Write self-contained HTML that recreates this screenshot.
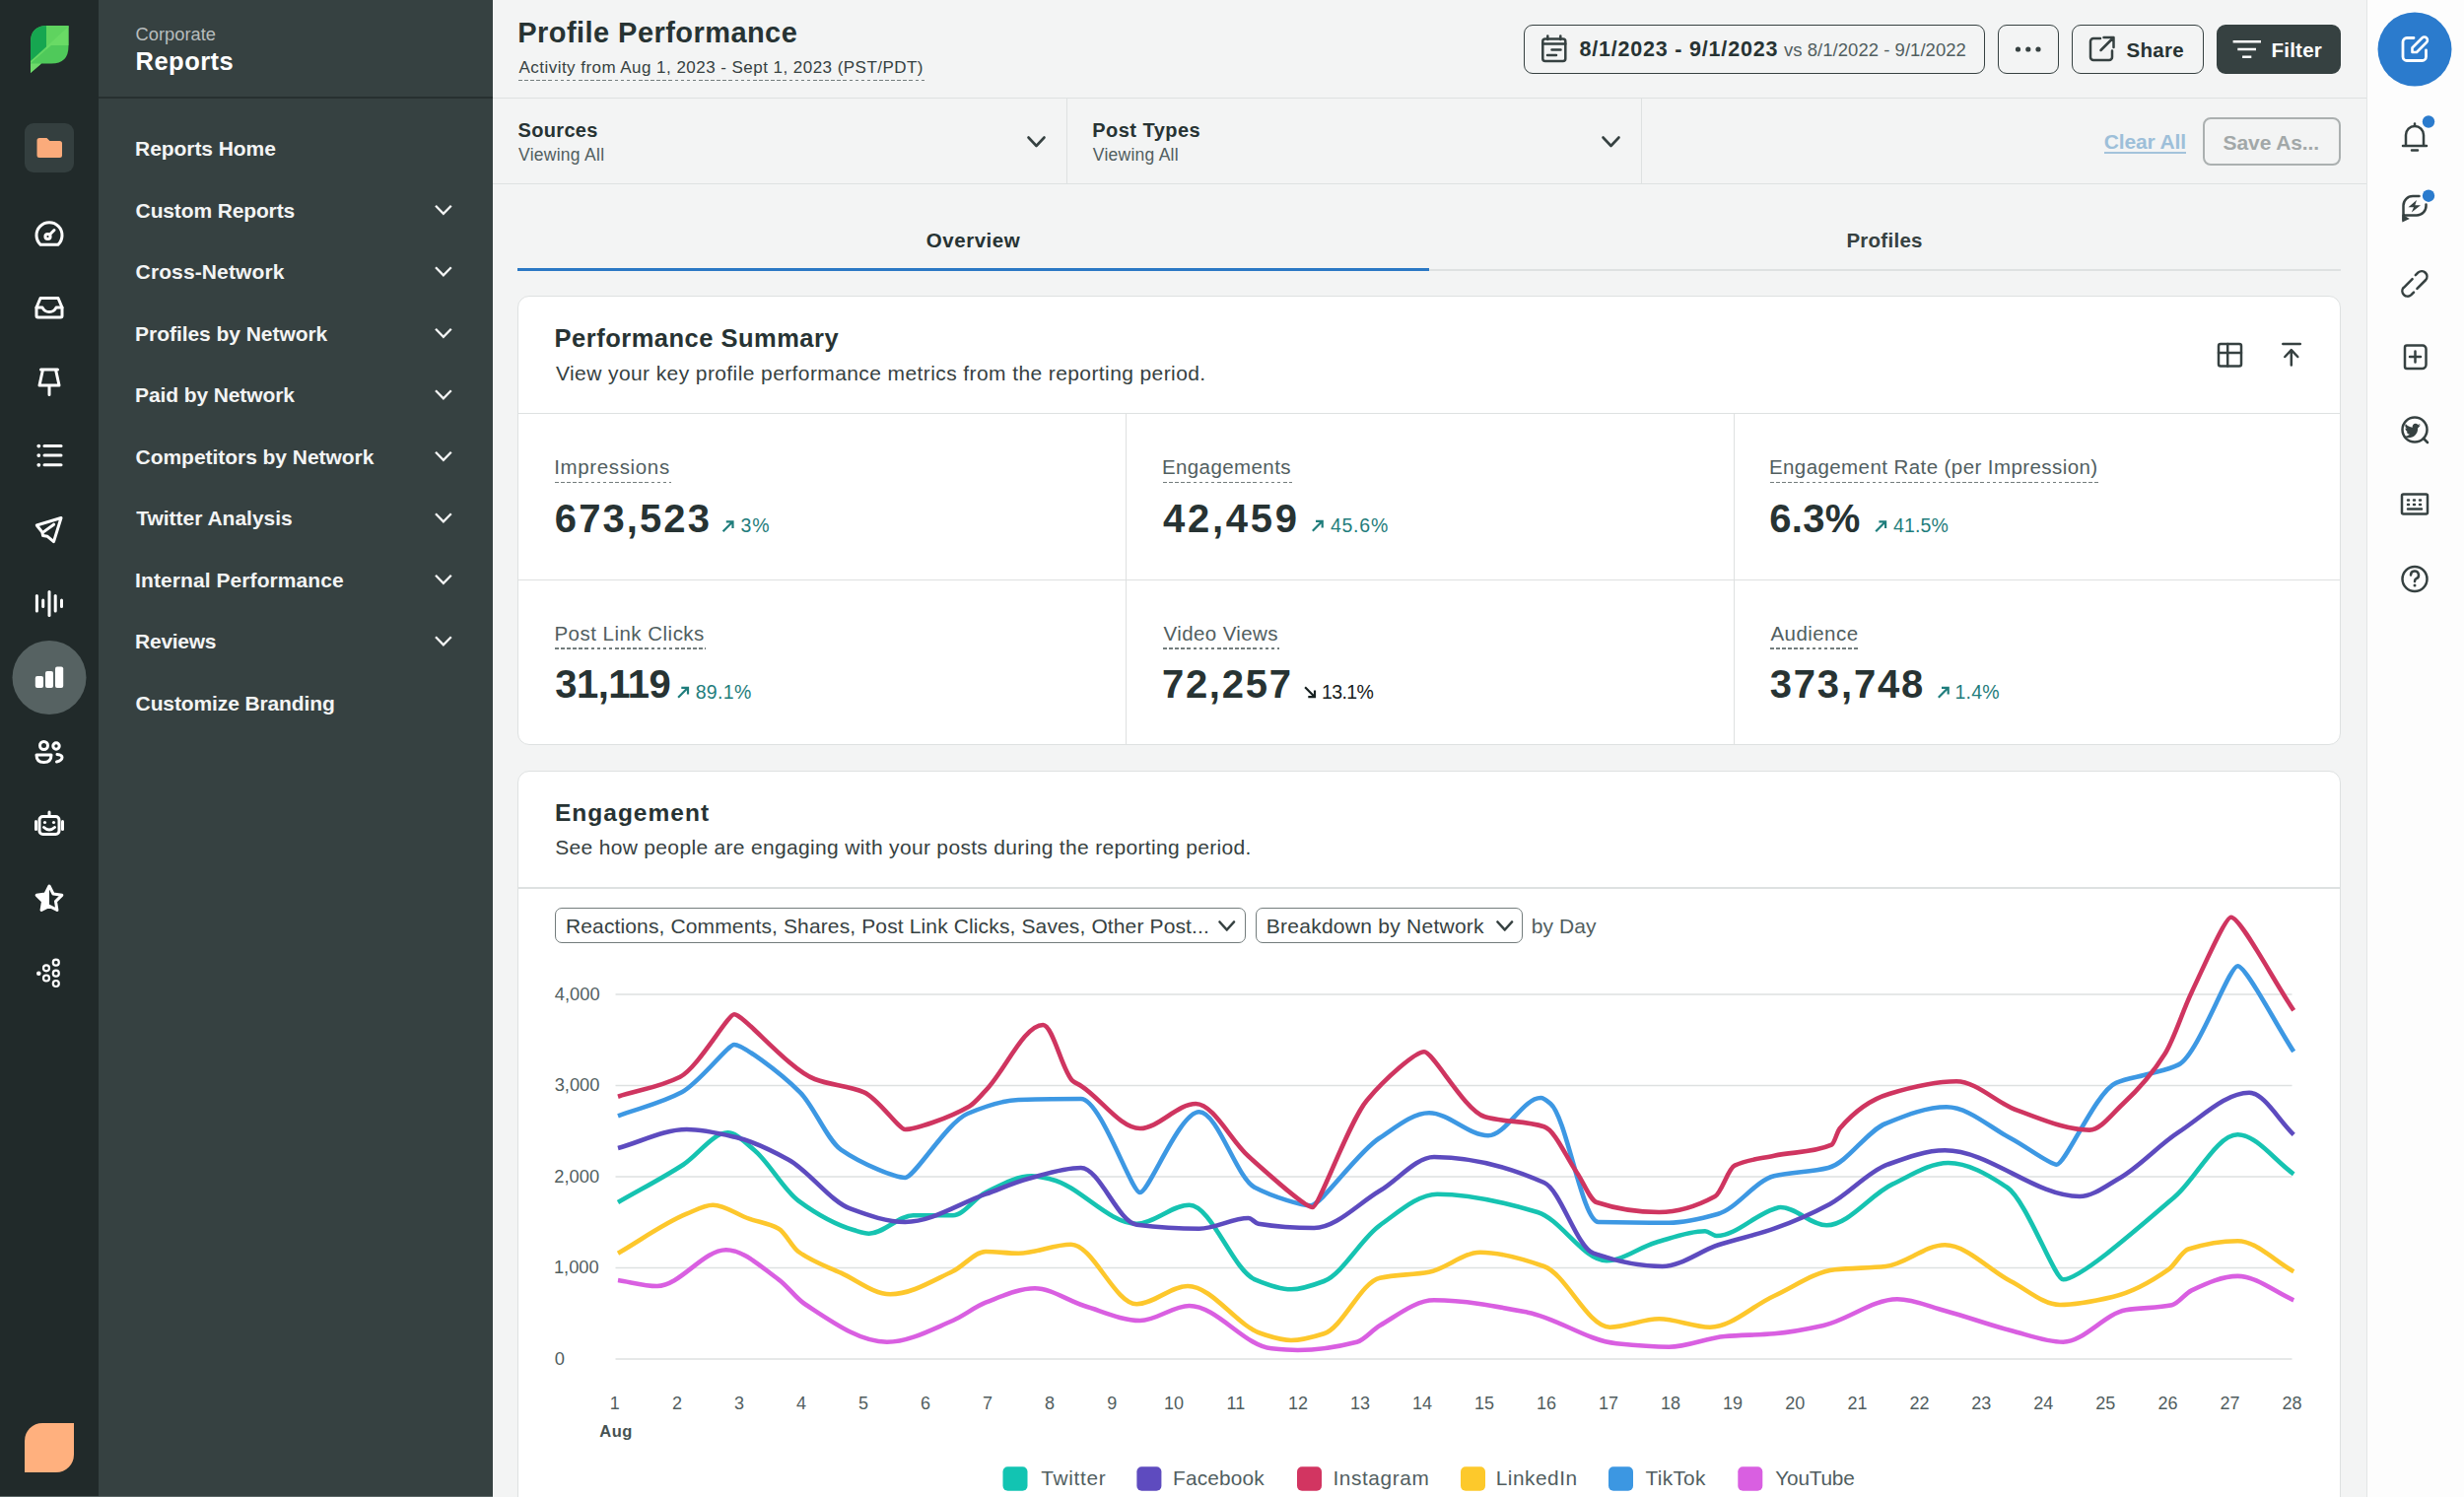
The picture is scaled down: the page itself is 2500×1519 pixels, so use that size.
<!DOCTYPE html>
<html><head><meta charset="utf-8"><title>Profile Performance</title>
<style>
html,body{margin:0;padding:0;}
body{width:2500px;height:1519px;position:relative;overflow:hidden;background:#f3f4f4;font-family:"Liberation Sans", sans-serif;}
.abs{position:absolute;}
.t{position:absolute;white-space:pre;line-height:1;}
</style></head><body>
<div class=abs style="left:0px;top:0px;width:100px;height:1519px;background:#212a2a;"></div>
<div class=abs style="left:100px;top:0px;width:400px;height:1519px;background:#364141;"></div>
<div class=abs style="left:100px;top:98px;width:400px;height:2px;background:#273030;"></div>
<div class=abs style="left:0px;top:1517.5px;width:500px;height:1.5px;background:#5b6666;"></div>
<div class=abs style="left:500px;top:98.5px;width:1901px;height:1.5px;background:#dee1e1;"></div>
<div class=abs style="left:500px;top:185.5px;width:1901px;height:1.5px;background:#dee1e1;"></div>
<div class=abs style="left:1081.5px;top:100px;width:1.5px;height:85.5px;background:#dee1e1;"></div>
<div class=abs style="left:1664.5px;top:100px;width:1.5px;height:85.5px;background:#dee1e1;"></div>
<div class=abs style="left:2401px;top:0px;width:99px;height:1519px;background:#fdfdfd;border-left:1.5px solid #e3e6e6;box-sizing:border-box"></div>
<div class=abs style="left:1545.5px;top:25px;width:468.0px;height:49.5px;background:transparent;border:1.8px solid #364141;border-radius:9px;box-sizing:border-box"></div>
<div class=abs style="left:2027px;top:25px;width:61.5px;height:49.5px;background:transparent;border:1.8px solid #364141;border-radius:9px;box-sizing:border-box"></div>
<div class=abs style="left:2102px;top:25px;width:133.5px;height:49.5px;background:transparent;border:1.8px solid #364141;border-radius:9px;box-sizing:border-box"></div>
<div class=abs style="left:2249px;top:25px;width:126px;height:49.5px;background:#364141;border:2px solid #364141;border-radius:9px;box-sizing:border-box"></div>
<div class=abs style="left:2234.5px;top:119px;width:140.5px;height:49px;background:transparent;border:2px solid #abb0b0;border-radius:8px;box-sizing:border-box"></div>
<div class=abs style="left:2135px;top:154.3px;width:82.5px;height:1.6999999999999886px;background:#a3c3db;"></div>
<div class=abs style="left:525px;top:273px;width:1850px;height:1.5px;background:#dee1e1;"></div>
<div class=abs style="left:525px;top:271.5px;width:925px;height:3.3000000000000114px;background:#2a78c4;"></div>
<div class=abs style="left:525px;top:300px;width:1850px;height:455.5px;background:#ffffff;border:1.5px solid #dee1e1;border-radius:12px;box-sizing:border-box"></div>
<div class=abs style="left:526px;top:418.5px;width:1848px;height:1.5px;background:#dee1e1;"></div>
<div class=abs style="left:526px;top:587.5px;width:1848px;height:1.5px;background:#dee1e1;"></div>
<div class=abs style="left:1141.5px;top:420px;width:1.5px;height:335px;background:#dee1e1;"></div>
<div class=abs style="left:1758.5px;top:420px;width:1.5px;height:335px;background:#dee1e1;"></div>
<div class=abs style="left:525px;top:782px;width:1850px;height:800px;background:#fff;border:1.5px solid #dee1e1;border-radius:12px;box-sizing:border-box"></div>
<div class=abs style="left:526px;top:900px;width:1848px;height:1.5px;background:#dee1e1;"></div>
<div class=abs style="left:563px;top:920.8px;width:700.5px;height:36.5px;background:transparent;border:1.8px solid #737c7c;border-radius:7px;box-sizing:border-box"></div>
<div class=abs style="left:1273.5px;top:920.8px;width:271.5px;height:36.5px;background:transparent;border:1.8px solid #737c7c;border-radius:7px;box-sizing:border-box"></div>
<div class=abs style="left:526px;top:80.9px;width:413px;height:1.6px;background:repeating-linear-gradient(90deg,#737d7d 0 3.6px,transparent 3.6px 6.1px)"></div>
<div class=abs style="left:563px;top:488.9px;width:117.5px;height:1.6px;background:repeating-linear-gradient(90deg,#737d7d 0 3.6px,transparent 3.6px 6.1px)"></div>
<div class=abs style="left:1179.5px;top:488.9px;width:131.4000000000001px;height:1.6px;background:repeating-linear-gradient(90deg,#737d7d 0 3.6px,transparent 3.6px 6.1px)"></div>
<div class=abs style="left:1795.5px;top:488.9px;width:333.5px;height:1.6px;background:repeating-linear-gradient(90deg,#737d7d 0 3.6px,transparent 3.6px 6.1px)"></div>
<div class=abs style="left:563px;top:657.4000000000001px;width:152.70000000000005px;height:1.6px;background:repeating-linear-gradient(90deg,#737d7d 0 3.6px,transparent 3.6px 6.1px)"></div>
<div class=abs style="left:1179.5px;top:657.4000000000001px;width:118.40000000000009px;height:1.6px;background:repeating-linear-gradient(90deg,#737d7d 0 3.6px,transparent 3.6px 6.1px)"></div>
<div class=abs style="left:1795.5px;top:657.4000000000001px;width:90.79999999999995px;height:1.6px;background:repeating-linear-gradient(90deg,#737d7d 0 3.6px,transparent 3.6px 6.1px)"></div>
<svg class=abs style="left:0;top:0" width="2500" height="1519" viewBox="0 0 2500 1519"><rect x="624.5" y="1008.25" width="1701" height="1.5" fill="#dee1e1"/><rect x="624.5" y="1100.75" width="1701" height="1.5" fill="#dee1e1"/><rect x="624.5" y="1193.25" width="1701" height="1.5" fill="#dee1e1"/><rect x="624.5" y="1285.75" width="1701" height="1.5" fill="#dee1e1"/><rect x="624.5" y="1378.25" width="1701" height="1.5" fill="#dee1e1"/><path d="M627.0,1299.0C640.2,1301.0 653.5,1305.0 666.7,1305.0C690.0,1305.0 713.4,1268.3 736.7,1268.3C754.5,1268.3 772.2,1285.5 790.0,1298.3C798.9,1304.7 807.8,1317.5 816.7,1323.3C844.5,1341.5 872.2,1361.7 900.0,1361.7C922.2,1361.7 944.5,1349.4 966.7,1340.0C977.8,1335.3 988.9,1326.0 1000.0,1321.7C1016.7,1315.3 1033.3,1307.3 1050.0,1307.3C1066.7,1307.3 1083.3,1319.9 1100.0,1325.0C1118.9,1330.7 1137.8,1340.0 1156.7,1340.0C1173.4,1340.0 1190.0,1325.0 1206.7,1325.0C1234.5,1325.0 1262.2,1365.5 1290.0,1368.3C1298.9,1369.2 1307.8,1370.0 1316.7,1370.0C1336.7,1370.0 1356.7,1366.8 1376.7,1361.7C1384.5,1359.7 1392.2,1349.5 1400.0,1345.0C1418.3,1334.3 1436.7,1319.3 1455.0,1319.3C1486.7,1319.3 1518.3,1325.6 1550.0,1331.7C1580.0,1337.4 1610.0,1360.2 1640.0,1363.3C1657.8,1365.1 1675.5,1366.7 1693.3,1366.7C1712.2,1366.7 1731.1,1357.6 1750.0,1356.0C1766.7,1354.6 1783.3,1354.7 1800.0,1353.3C1816.7,1351.9 1833.3,1348.7 1850.0,1345.0C1875.0,1339.5 1900.0,1318.3 1925.0,1318.3C1941.1,1318.3 1957.2,1325.7 1973.3,1330.0C1995.5,1335.9 2017.8,1344.4 2040.0,1350.0C2057.8,1354.5 2075.5,1361.7 2093.3,1361.7C2114.5,1361.7 2135.6,1332.9 2156.8,1329.3C2172.4,1326.6 2188.0,1327.5 2203.6,1324.3C2210.3,1322.9 2216.9,1312.4 2223.6,1309.3C2239.2,1302.1 2254.8,1294.9 2270.4,1294.9C2289.3,1294.9 2308.3,1311.2 2327.2,1319.3" fill="none" stroke="#d95fe1" stroke-width="4.6" stroke-linejoin="round" stroke-linecap="butt"/><path d="M627.0,1271.7C650.2,1258.4 673.5,1241.2 696.7,1231.7C705.6,1228.1 714.4,1222.7 723.3,1222.7C735.5,1222.7 747.8,1232.4 760.0,1236.7C770.0,1240.2 780.0,1241.3 790.0,1246.7C796.7,1250.3 803.3,1265.1 810.0,1270.0C824.4,1280.6 838.9,1285.0 853.3,1291.7C870.0,1299.4 886.6,1313.3 903.3,1313.3C924.4,1313.3 945.6,1299.9 966.7,1290.0C977.8,1284.8 988.9,1270.0 1000.0,1270.0C1011.1,1270.0 1022.2,1271.7 1033.3,1271.7C1051.1,1271.7 1068.9,1262.7 1086.7,1262.7C1108.9,1262.7 1131.1,1323.3 1153.3,1323.3C1170.5,1323.3 1187.8,1305.0 1205.0,1305.0C1230.0,1305.0 1255.0,1345.5 1280.0,1353.3C1290.0,1356.4 1300.0,1360.0 1310.0,1360.0C1321.1,1360.0 1332.2,1356.8 1343.3,1353.3C1362.2,1347.3 1381.1,1300.7 1400.0,1296.7C1416.7,1293.2 1433.3,1293.7 1450.0,1290.7C1467.2,1287.6 1484.5,1270.7 1501.7,1270.7C1523.4,1270.7 1545.0,1277.3 1566.7,1285.0C1588.9,1292.9 1611.1,1346.7 1633.3,1346.7C1650.0,1346.7 1666.6,1338.3 1683.3,1338.3C1700.5,1338.3 1717.8,1346.7 1735.0,1346.7C1756.7,1346.7 1778.3,1324.9 1800.0,1315.0C1820.6,1305.6 1841.1,1290.5 1861.7,1288.3C1878.9,1286.4 1896.1,1286.8 1913.3,1285.0C1933.3,1282.9 1953.3,1263.3 1973.3,1263.3C1995.5,1263.3 2017.8,1288.6 2040.0,1300.0C2056.7,1308.5 2073.3,1324.0 2090.0,1324.0C2107.8,1324.0 2125.6,1320.1 2143.4,1316.0C2162.3,1311.7 2181.3,1301.5 2200.2,1288.2C2206.9,1283.5 2213.6,1269.6 2220.3,1267.5C2237.0,1262.2 2253.7,1259.2 2270.4,1259.2C2289.3,1259.2 2308.3,1279.9 2327.2,1290.2" fill="none" stroke="#fdc72c" stroke-width="4.6" stroke-linejoin="round" stroke-linecap="butt"/><path d="M627.0,1220.0C649.1,1207.2 671.2,1196.0 693.3,1181.7C708.3,1172.0 723.3,1149.3 738.3,1149.3C747.2,1149.3 756.1,1159.5 765.0,1166.7C780.0,1178.9 795.0,1207.3 810.0,1218.3C828.9,1232.2 847.8,1242.7 866.7,1248.3C871.7,1249.8 876.7,1251.7 881.7,1251.7C896.7,1251.7 911.7,1233.3 926.7,1233.3C940.0,1233.3 953.4,1233.3 966.7,1233.3C977.8,1233.3 988.9,1215.4 1000.0,1210.0C1015.6,1202.5 1031.1,1193.3 1046.7,1193.3C1053.4,1193.3 1060.0,1195.2 1066.7,1196.7C1095.6,1203.4 1124.4,1241.7 1153.3,1241.7C1171.1,1241.7 1188.9,1222.7 1206.7,1222.7C1228.9,1222.7 1251.1,1289.1 1273.3,1298.3C1285.5,1303.4 1297.8,1308.3 1310.0,1308.3C1321.1,1308.3 1332.2,1304.2 1343.3,1300.0C1362.2,1292.8 1381.1,1256.6 1400.0,1243.3C1419.4,1229.6 1438.9,1211.7 1458.3,1211.7C1492.2,1211.7 1526.1,1219.9 1560.0,1230.0C1583.3,1236.9 1606.7,1279.3 1630.0,1279.3C1646.7,1279.3 1663.3,1265.4 1680.0,1260.7C1696.7,1256.0 1713.3,1249.3 1730.0,1249.3C1733.9,1249.3 1737.8,1254.0 1741.7,1254.0C1761.1,1254.0 1780.6,1232.6 1800.0,1226.7C1802.2,1226.0 1804.5,1225.0 1806.7,1225.0C1822.2,1225.0 1837.8,1243.3 1853.3,1243.3C1875.5,1243.3 1897.8,1212.2 1920.0,1201.7C1938.9,1192.8 1957.8,1180.0 1976.7,1180.0C1996.7,1180.0 2016.7,1191.6 2036.7,1205.0C2055.6,1217.6 2084.8,1298.3 2093.3,1298.3C2110.3,1298.3 2169.0,1246.6 2206.9,1214.1C2228.1,1195.9 2249.2,1151.3 2270.4,1151.3C2289.3,1151.3 2308.3,1178.0 2327.2,1191.3" fill="none" stroke="#16c3b1" stroke-width="4.6" stroke-linejoin="round" stroke-linecap="butt"/><path d="M627.0,1165.0C650.2,1158.7 673.5,1146.0 696.7,1146.0C713.4,1146.0 730.0,1150.1 746.7,1154.0C764.5,1158.1 782.2,1167.0 800.0,1176.7C821.1,1188.3 842.2,1219.0 863.3,1226.7C881.6,1233.4 900.0,1240.0 918.3,1240.0C945.5,1240.0 972.8,1221.4 1000.0,1211.7C1014.4,1206.6 1028.9,1199.8 1043.3,1196.0C1061.1,1191.3 1078.9,1185.0 1096.7,1185.0C1115.6,1185.0 1134.4,1240.4 1153.3,1242.7C1174.4,1245.3 1195.6,1246.7 1216.7,1246.7C1233.4,1246.7 1250.0,1236.0 1266.7,1236.0C1270.0,1236.0 1273.4,1241.2 1276.7,1241.7C1295.6,1244.8 1314.4,1246.0 1333.3,1246.0C1355.5,1246.0 1377.8,1221.5 1400.0,1208.3C1418.3,1197.4 1436.7,1174.0 1455.0,1174.0C1492.2,1174.0 1529.5,1183.6 1566.7,1200.0C1583.4,1207.3 1600.0,1265.9 1616.7,1271.7C1640.0,1279.9 1663.4,1285.0 1686.7,1285.0C1705.6,1285.0 1724.4,1269.6 1743.3,1263.3C1762.2,1257.0 1781.1,1253.4 1800.0,1246.7C1818.9,1240.0 1837.8,1231.8 1856.7,1221.7C1876.1,1211.3 1895.6,1188.8 1915.0,1181.7C1934.4,1174.6 1953.9,1167.3 1973.3,1167.3C2018.9,1167.3 2064.4,1214.0 2110.0,1214.0C2123.4,1214.0 2136.7,1203.3 2150.1,1195.7C2170.2,1184.4 2190.2,1162.0 2210.3,1148.9C2234.2,1133.3 2258.2,1108.8 2282.1,1108.8C2297.1,1108.8 2312.2,1137.1 2327.2,1151.3" fill="none" stroke="#5d4bbf" stroke-width="4.6" stroke-linejoin="round" stroke-linecap="butt"/><path d="M627.0,1132.3C648.6,1124.3 670.1,1119.8 691.7,1108.3C709.5,1098.8 738.6,1060.0 745.0,1060.0C753.0,1060.0 789.5,1086.5 811.7,1108.3C825.6,1121.9 839.4,1157.1 853.3,1166.7C875.0,1181.7 908.5,1195.0 918.3,1195.0C927.8,1195.0 960.6,1138.9 981.7,1130.0C998.9,1122.8 1016.1,1116.5 1033.3,1116.0C1054.4,1115.4 1075.6,1115.0 1096.7,1115.0C1116.7,1115.0 1147.7,1210.0 1156.7,1210.0C1165.7,1210.0 1196.7,1128.3 1216.7,1128.3C1235.6,1128.3 1254.4,1195.2 1273.3,1205.0C1292.2,1214.9 1321.5,1223.3 1330.0,1223.3C1340.4,1223.3 1376.2,1170.2 1399.3,1155.0C1416.2,1143.9 1433.1,1129.3 1450.0,1129.3C1470.0,1129.3 1490.0,1152.3 1510.0,1152.3C1527.8,1152.3 1545.5,1114.0 1563.3,1114.0C1566.6,1114.0 1570.0,1117.2 1573.3,1120.0C1589.4,1133.7 1605.6,1239.7 1621.7,1240.0C1645.6,1240.5 1669.4,1240.7 1693.3,1240.7C1710.0,1240.7 1726.6,1236.4 1743.3,1231.7C1762.2,1226.4 1781.1,1197.9 1800.0,1193.3C1818.3,1188.8 1836.7,1189.6 1855.0,1185.0C1874.4,1180.1 1893.9,1147.8 1913.3,1140.0C1933.9,1131.7 1954.4,1123.3 1975.0,1123.3C1996.7,1123.3 2018.3,1143.5 2040.0,1155.0C2055.6,1163.2 2079.7,1181.7 2086.7,1181.7C2095.7,1181.7 2126.8,1107.3 2146.8,1098.8C2157.9,1094.1 2169.1,1093.0 2180.2,1089.8C2190.2,1086.9 2200.3,1085.3 2210.3,1080.4C2230.3,1070.6 2261.4,980.2 2270.4,980.2C2278.9,980.2 2308.3,1038.1 2327.2,1067.1" fill="none" stroke="#3d98e3" stroke-width="4.6" stroke-linejoin="round" stroke-linecap="butt"/><path d="M627.0,1112.7C648.0,1106.0 669.0,1103.3 690.0,1092.7C708.3,1083.5 738.4,1029.3 745.0,1029.3C754.8,1029.3 799.5,1084.5 826.7,1095.0C843.4,1101.4 860.0,1101.3 876.7,1108.3C890.6,1114.1 912.1,1146.0 918.3,1146.0C928.0,1146.0 961.6,1135.1 983.3,1122.7C988.9,1119.5 994.4,1112.4 1000.0,1106.7C1019.4,1086.8 1038.9,1040.0 1058.3,1040.0C1068.3,1040.0 1078.3,1088.5 1088.3,1096.7C1091.1,1099.0 1093.9,1099.9 1096.7,1101.7C1116.7,1114.4 1136.7,1145.0 1156.7,1145.0C1175.6,1145.0 1194.4,1120.0 1213.3,1120.0C1231.1,1120.0 1248.9,1157.5 1266.7,1173.3C1288.4,1192.6 1323.9,1225.0 1331.7,1225.0C1338.3,1225.0 1368.4,1138.5 1386.7,1116.7C1406.1,1093.6 1436.3,1067.3 1445.0,1067.3C1454.3,1067.3 1486.1,1127.4 1506.7,1133.3C1526.7,1139.0 1546.7,1136.9 1566.7,1143.3C1577.8,1146.9 1588.9,1173.9 1600.0,1190.0C1606.7,1199.7 1613.3,1217.8 1620.0,1220.0C1641.1,1227.0 1662.2,1230.0 1683.3,1230.0C1702.2,1230.0 1721.1,1224.2 1740.0,1214.0C1746.7,1210.4 1753.3,1185.8 1760.0,1182.7C1773.3,1176.4 1786.7,1175.6 1800.0,1172.7C1819.4,1168.5 1838.9,1170.1 1858.3,1161.7C1861.1,1160.5 1863.9,1148.3 1866.7,1145.0C1883.4,1125.5 1900.0,1115.0 1916.7,1110.0C1939.5,1103.1 1962.2,1097.3 1985.0,1097.3C2005.6,1097.3 2026.1,1119.5 2046.7,1126.7C2071.1,1135.2 2095.6,1146.6 2120.0,1146.6C2131.2,1146.6 2142.3,1130.9 2153.5,1120.5C2168.0,1107.0 2182.4,1092.1 2196.9,1068.7C2205.8,1054.3 2214.7,1025.6 2223.6,1006.9C2237.0,978.8 2257.7,930.7 2263.7,930.7C2273.2,930.7 2306.0,993.8 2327.2,1025.3" fill="none" stroke="#cf3560" stroke-width="4.6" stroke-linejoin="round" stroke-linecap="butt"/></svg>
<svg class=abs style="left:0;top:0" width="2500" height="1519" viewBox="0 0 2500 1519"><g>
<path d="M31,43 Q31,26 48,26 L69.5,26 L69.5,47 Q69.5,64.5 52,64.5 L42,64.5 L31,74 Z" fill="#4fc95a"/>
<path d="M31,43 Q31,26 48,26 L47,26 L47,50 L31,62 Z" fill="#16a650"/>
<path d="M47,26 L69.5,26 L69.5,28 L47,48 Z" fill="#5fd35f"/>
<path d="M69.5,27 L69.5,46 L52,46 L31,64 L31,62 Z" fill="#6bdc66" opacity="0.9"/>
<path d="M31,64.5 L42,64.5 L31,74 Z" fill="#6fd96a"/>
</g>
<rect x="25" y="125" width="50" height="50" rx="9" fill="#343f3f"/>
<path d="M37.5,142.5 a2.5,2.5 0 0 1 2.5,-2.5 h7.5 l3,3 h10 a2.5,2.5 0 0 1 2.5,2.5 v12 a2.5,2.5 0 0 1 -2.5,2.5 h-20.5 a2.5,2.5 0 0 1 -2.5,-2.5 z" fill="#fbab7b"/>
<path d="M41.2,248.3 A13,13 0 1 1 58.8,248.3 Z" fill="none" stroke="#ffffff" stroke-width="3" stroke-linecap="round" stroke-linejoin="round"/>
<circle cx="48.5" cy="240" r="2.6" fill="none" stroke="#ffffff" stroke-width="3" stroke-linecap="round" stroke-linejoin="round" stroke-width="2.6"/><line x1="50.5" y1="238" x2="55" y2="233.5" fill="none" stroke="#ffffff" stroke-width="3" stroke-linecap="round" stroke-linejoin="round" stroke-width="2.6"/>
<path d="M37,312 L41,302.5 H59 L63,312 V320.5 a1.5,1.5 0 0 1 -1.5,1.5 H38.5 a1.5,1.5 0 0 1 -1.5,-1.5 Z" fill="none" stroke="#ffffff" stroke-width="3" stroke-linecap="round" stroke-linejoin="round"/>
<path d="M37,312 H43 Q45,316.5 50,316.5 Q55,316.5 57,312 H63" fill="none" stroke="#ffffff" stroke-width="3" stroke-linecap="round" stroke-linejoin="round"/>
<path d="M41.5,375 H58.5 M43.5,375 L40,391 H60 L56.5,375 M50,391 V400.5" fill="none" stroke="#ffffff" stroke-width="3" stroke-linecap="round" stroke-linejoin="round"/>
<circle cx="39.3" cy="452.6" r="1.9" fill="#ffffff"/><line x1="45" y1="452.6" x2="62" y2="452.6" fill="none" stroke="#ffffff" stroke-width="3" stroke-linecap="round" stroke-linejoin="round"/>
<circle cx="39.3" cy="462.1" r="1.9" fill="#ffffff"/><line x1="45" y1="462.1" x2="62" y2="462.1" fill="none" stroke="#ffffff" stroke-width="3" stroke-linecap="round" stroke-linejoin="round"/>
<circle cx="39.3" cy="471.8" r="1.9" fill="#ffffff"/><line x1="45" y1="471.8" x2="62" y2="471.8" fill="none" stroke="#ffffff" stroke-width="3" stroke-linecap="round" stroke-linejoin="round"/>
<path d="M37.3,533 L62,525.5 L54.5,549.6 L48.2,544.3 L43.6,543.6 L42.9,540.2 Z M43,540.6 L54.6,532.2" fill="none" stroke="#ffffff" stroke-width="3" stroke-linecap="round" stroke-linejoin="round" stroke-width="2.5"/>
<line x1="37.4" y1="604.5" x2="37.4" y2="620" fill="none" stroke="#ffffff" stroke-width="3" stroke-linecap="round" stroke-linejoin="round" stroke-width="2.8"/>
<line x1="43.7" y1="609" x2="43.7" y2="615.5" fill="none" stroke="#ffffff" stroke-width="3" stroke-linecap="round" stroke-linejoin="round" stroke-width="2.8"/>
<line x1="50" y1="600.5" x2="50" y2="624.5" fill="none" stroke="#ffffff" stroke-width="3" stroke-linecap="round" stroke-linejoin="round" stroke-width="2.8"/>
<line x1="56.2" y1="604.5" x2="56.2" y2="620" fill="none" stroke="#ffffff" stroke-width="3" stroke-linecap="round" stroke-linejoin="round" stroke-width="2.8"/>
<line x1="62.5" y1="609" x2="62.5" y2="615.5" fill="none" stroke="#ffffff" stroke-width="3" stroke-linecap="round" stroke-linejoin="round" stroke-width="2.8"/>
<circle cx="50" cy="687.5" r="37.5" fill="#566262"/>
<rect x="35.8" y="686" width="8.200000000000003" height="12" rx="2" fill="#ffffff"/>
<rect x="46" y="681" width="8" height="17" rx="2" fill="#ffffff"/>
<rect x="56" y="676.5" width="8.200000000000003" height="21.5" rx="2" fill="#ffffff"/>
<circle cx="44.5" cy="756.5" r="4" fill="none" stroke="#ffffff" stroke-width="3" stroke-linecap="round" stroke-linejoin="round"/><path d="M37,766 H52 Q52,773.5 44.5,773.5 Q37,773.5 37,766 Z" fill="none" stroke="#ffffff" stroke-width="3" stroke-linecap="round" stroke-linejoin="round"/>
<circle cx="57" cy="757" r="3.2" fill="none" stroke="#ffffff" stroke-width="3" stroke-linecap="round" stroke-linejoin="round"/><path d="M58,765.5 Q63,766 63,768.5 Q63,771.5 57.5,773" fill="none" stroke="#ffffff" stroke-width="3" stroke-linecap="round" stroke-linejoin="round"/>
<rect x="40" y="828.5" width="20" height="18" rx="3.5" fill="none" stroke="#ffffff" stroke-width="3" stroke-linecap="round" stroke-linejoin="round"/><line x1="50" y1="824" x2="50" y2="828" fill="none" stroke="#ffffff" stroke-width="3" stroke-linecap="round" stroke-linejoin="round"/>
<line x1="36.5" y1="833.5" x2="36.5" y2="841.5" fill="none" stroke="#ffffff" stroke-width="3" stroke-linecap="round" stroke-linejoin="round"/><line x1="63.5" y1="833.5" x2="63.5" y2="841.5" fill="none" stroke="#ffffff" stroke-width="3" stroke-linecap="round" stroke-linejoin="round"/>
<circle cx="45.5" cy="834.5" r="1.6" fill="#ffffff"/><circle cx="54.5" cy="834.5" r="1.6" fill="#ffffff"/><path d="M44.5,839.5 Q50,844.5 55.5,839.5" fill="none" stroke="#ffffff" stroke-width="3" stroke-linecap="round" stroke-linejoin="round"/>
<path d="M50.00,899.00 L54.00,907.00 L62.84,908.33 L56.47,914.60 L57.94,923.42 L50.00,919.30 L42.06,923.42 L43.53,914.60 L37.16,908.33 L46.00,907.00 Z" fill="none" stroke="#ffffff" stroke-width="3" stroke-linecap="round" stroke-linejoin="round" stroke-width="2.8"/>
<path d="M50,899 L50,918.5 L42.06,923.42 L43.53,914.60 L37.16,908.33 L46.00,907.00 Z" fill="#fff"/>
<circle cx="39.3" cy="987.7" r="2.3" fill="#ffffff"/>
<circle cx="47" cy="982.3" r="3" fill="none" stroke="#ffffff" stroke-width="2.2"/>
<circle cx="47" cy="992.5" r="3" fill="none" stroke="#ffffff" stroke-width="2.2"/>
<circle cx="56.8" cy="976.7" r="3" fill="none" stroke="#ffffff" stroke-width="2.2"/>
<circle cx="56.8" cy="987.7" r="3" fill="none" stroke="#ffffff" stroke-width="2.2"/>
<circle cx="56.8" cy="998" r="3" fill="none" stroke="#ffffff" stroke-width="2.2"/>
<path d="M25,1494 V1462 A18,18 0 0 1 43,1444 H75 V1476 A18,18 0 0 1 57,1494 Z" fill="#ffb07e"/>
<rect x="1565.3" y="39.5" width="23" height="22.5" rx="2.5" fill="none" stroke="#364141" stroke-width="2.5" stroke-linecap="round" stroke-linejoin="round"/><path d="M1565.3,44.5 H1588.3 M1570.3,36.5 V40 M1583.3,36.5 V40 M1574.5,50.5 H1583.5 M1570,56 H1579" fill="none" stroke="#364141" stroke-width="2.5" stroke-linecap="round" stroke-linejoin="round"/>
<circle cx="2047.5" cy="50" r="2.6" fill="#364141"/>
<circle cx="2057.8" cy="50" r="2.6" fill="#364141"/>
<circle cx="2068" cy="50" r="2.6" fill="#364141"/>
<path d="M2131,39 H2124 a3,3 0 0 0 -3,3 V58 a3,3 0 0 0 3,3 H2140 a3,3 0 0 0 3,-3 V51.5 M2134.5,38 H2144.5 V48 M2144,38.5 L2131.5,51" fill="none" stroke="#364141" stroke-width="2.5" stroke-linecap="round" stroke-linejoin="round" stroke-width="2.6"/>
<path d="M2265.6,42.2 H2294 M2270.3,50 H2289 M2275.1,57.7 H2284.3" fill="none" stroke="#fff" stroke-width="2.4" stroke-linecap="butt"/>
<polyline points="1043.5,139.5 1051.5,148 1059.5,139.5" fill="none" stroke="#364141" stroke-width="2.6" stroke-linecap="round" stroke-linejoin="round"/>
<polyline points="1626.5,139.5 1634.5,148 1642.5,139.5" fill="none" stroke="#364141" stroke-width="2.6" stroke-linecap="round" stroke-linejoin="round"/>
<rect x="2251" y="349" width="23" height="22.5" rx="2" fill="none" stroke="#364141" stroke-width="2.5" stroke-linecap="round" stroke-linejoin="round" stroke-width="2.1"/><path d="M2251,358 H2274 M2260.2,349 V371.5" fill="none" stroke="#364141" stroke-width="2.5" stroke-linecap="round" stroke-linejoin="round" stroke-width="2.1"/>
<path d="M2316.3,349.1 H2333.8 M2324.8,355.5 V370.5 M2318.3,362 L2324.8,355.2 L2331.3,362" fill="none" stroke="#364141" stroke-width="2.5" stroke-linecap="round" stroke-linejoin="round" stroke-width="2.1" stroke-linecap="butt"/>
<polyline points="1237.5,935.5 1244.75,943.5 1252,935.5" fill="none" stroke="#364141" stroke-width="2.6" stroke-linecap="round" stroke-linejoin="round"/>
<polyline points="1519.5,935.5 1526.75,943.5 1534,935.5" fill="none" stroke="#364141" stroke-width="2.6" stroke-linecap="round" stroke-linejoin="round"/>
<circle cx="2450" cy="50" r="37.5" fill="#2b7bcd"/>
<path d="M2449,38.5 H2442 a4,4 0 0 0 -4,4 V57.5 a4,4 0 0 0 4,4 H2457.5 a4,4 0 0 0 4,-4 V51" fill="none" stroke="#fff" stroke-width="2.8" stroke-linecap="round"/>
<path d="M2447.5,53 V48.5 L2457.5,38.5 a3,3 0 0 1 4.5,4.5 L2452,53 Z" fill="none" stroke="#fff" stroke-width="2.6" stroke-linejoin="round"/>
<path d="M2438,148 H2462 M2441,148 V137 a9,9 0 0 1 18,0 V148 M2450,125.5 V127.5 M2447,152.5 H2453" fill="none" stroke="#364141" stroke-width="2.5" stroke-linecap="round" stroke-linejoin="round"/>
<circle cx="2464" cy="123.5" r="6.2" fill="#2b7bcd"/>
<path d="M2454.5,199 H2448 a9.5,9.5 0 0 0 -9.5,9.5 V223 M2461.5,207.5 V209 a9.5,9.5 0 0 1 -9.5,9.5 H2440" fill="none" stroke="#364141" stroke-width="2.5" stroke-linecap="round" stroke-linejoin="round"/>
<path d="M2437.3,217.5 L2444.8,222 L2437.3,225.5 Z" fill="#364141"/>
<path d="M2452,203 L2443.5,210.3 H2449 L2446.8,215.5 L2456,208.3 H2450.3 Z" fill="#364141"/>
<circle cx="2464" cy="198.7" r="6.2" fill="#2b7bcd"/>
<path d="M2450.8,279.2 L2453.6,276.4 a5.4,5.4 0 0 1 7.6,7.6 L2452.4,292.8 M2438.9,291.8 L2447.6,283.1 M2449,296.6 L2446.2,299.4 a5.4,5.4 0 0 1 -7.6,-7.6" fill="none" stroke="#364141" stroke-width="2.5" stroke-linecap="round" stroke-linejoin="round"/>
<path d="M2440,352.5 a2,2 0 0 1 2,-2 H2458 a3.5,3.5 0 0 1 3.5,3.5 V370 a4,4 0 0 1 -4,4 H2442 a2,2 0 0 1 -2,-2 Z M2450.5,356.5 V367.5 M2445,362 H2456" fill="none" stroke="#364141" stroke-width="2.5" stroke-linecap="round" stroke-linejoin="round"/>
<circle cx="2450" cy="436" r="12.5" fill="none" stroke="#364141" stroke-width="2.5" stroke-linecap="round" stroke-linejoin="round"/><path d="M2459,445 L2463,449" fill="none" stroke="#364141" stroke-width="2.5" stroke-linecap="round" stroke-linejoin="round"/>
<path d="M2456,431.5 c-0.6,0.3 -1.3,0.5 -2,0.5 c0.7,-0.4 1.3,-1.1 1.5,-1.9 c-0.7,0.4 -1.4,0.7 -2.2,0.8 c-1.4,-1.5 -3.8,-1.4 -5,0.1 c-0.6,0.8 -0.8,1.8 -0.5,2.7 c-2.8,-0.1 -5.4,-1.4 -7,-3.6 c-1,1.7 -0.4,3.8 1.2,4.9 c-0.6,0 -1.1,-0.2 -1.6,-0.4 c0,1.8 1.2,3.3 2.9,3.6 c-0.5,0.2 -1.1,0.2 -1.6,0.1 c0.5,1.4 1.8,2.4 3.3,2.5 c-1.9,1.5 -4.3,2.1 -6.6,1.8 c6.8,4.3 15.1,-0.3 14.7,-8.1 c0.7,-0.5 1.3,-1.1 1.8,-1.9 z" fill="#364141"/>
<rect x="2437" y="501.5" width="26" height="20" rx="1.5" fill="none" stroke="#364141" stroke-width="2.5" stroke-linecap="round" stroke-linejoin="round"/><path d="M2443,507.5 H2444 M2449,507.5 H2450 M2455,507.5 H2456 M2443,512 H2444 M2449,512 H2450 M2455,512 H2456 M2443,516.5 H2457" fill="none" stroke="#364141" stroke-width="2.5" stroke-linecap="round" stroke-linejoin="round" stroke-width="2.3"/>
<circle cx="2450" cy="587.5" r="12.5" fill="none" stroke="#364141" stroke-width="2.5" stroke-linecap="round" stroke-linejoin="round"/><path d="M2446,583.5 a4,4 0 1 1 5.5,3.7 Q2450,588 2450,590" fill="none" stroke="#364141" stroke-width="2.5" stroke-linecap="round" stroke-linejoin="round"/><circle cx="2450" cy="594" r="1.5" fill="#364141"/>
<path d="M733.5999999999999,539.2 L743.5,529.3 M736.8,529.3 H743.5 V536.0" fill="none" stroke="#1f7d7c" stroke-width="2.2" stroke-linecap="butt"/>
<path d="M1331.8,538.7 L1341.7,528.8 M1335.0,528.8 H1341.7 V535.5" fill="none" stroke="#1f7d7c" stroke-width="2.2" stroke-linecap="butt"/>
<path d="M1903.2,539.2 L1913.1000000000001,529.3 M1906.4,529.3 H1913.1000000000001 V536.0" fill="none" stroke="#1f7d7c" stroke-width="2.2" stroke-linecap="butt"/>
<path d="M688.0999999999999,707.7 L698.0,697.8 M691.3,697.8 H698.0 V704.5" fill="none" stroke="#1f7d7c" stroke-width="2.2" stroke-linecap="butt"/>
<path d="M1324.1,697.3 L1334.0,707.2 M1334.0,700.5 V707.2 H1327.3" fill="none" stroke="#162020" stroke-width="2.2" stroke-linecap="butt"/>
<path d="M1966.8,707.7 L1976.7,697.8 M1970.0,697.8 H1976.7 V704.5" fill="none" stroke="#1f7d7c" stroke-width="2.2" stroke-linecap="butt"/>
<rect x="1017.5" y="1488.3" width="25" height="24.5" rx="5" fill="#12c4b2"/>
<rect x="1153.4" y="1488.3" width="25" height="24.5" rx="5" fill="#5e4bbf"/>
<rect x="1316" y="1488.3" width="25" height="24.5" rx="5" fill="#d23561"/>
<rect x="1482" y="1488.3" width="25" height="24.5" rx="5" fill="#fdc92b"/>
<rect x="1632" y="1488.3" width="25" height="24.5" rx="5" fill="#3c97e2"/>
<rect x="1763.3" y="1488.3" width="25" height="24.5" rx="5" fill="#d95fe1"/></svg>
<svg class=abs style="left:0;top:0" width="2500" height="1519" viewBox="0 0 2500 1519"><polyline points="442,208.7 449.9,216.9 457.8,208.7" fill="none" stroke="#f3f4f4" stroke-width="2.3" stroke-linecap="butt" stroke-linejoin="miter"/><polyline points="442,271.2 449.9,279.4 457.8,271.2" fill="none" stroke="#f3f4f4" stroke-width="2.3" stroke-linecap="butt" stroke-linejoin="miter"/><polyline points="442,333.7 449.9,341.9 457.8,333.7" fill="none" stroke="#f3f4f4" stroke-width="2.3" stroke-linecap="butt" stroke-linejoin="miter"/><polyline points="442,396.2 449.9,404.4 457.8,396.2" fill="none" stroke="#f3f4f4" stroke-width="2.3" stroke-linecap="butt" stroke-linejoin="miter"/><polyline points="442,458.7 449.9,466.9 457.8,458.7" fill="none" stroke="#f3f4f4" stroke-width="2.3" stroke-linecap="butt" stroke-linejoin="miter"/><polyline points="442,521.2 449.9,529.4 457.8,521.2" fill="none" stroke="#f3f4f4" stroke-width="2.3" stroke-linecap="butt" stroke-linejoin="miter"/><polyline points="442,583.7 449.9,591.9 457.8,583.7" fill="none" stroke="#f3f4f4" stroke-width="2.3" stroke-linecap="butt" stroke-linejoin="miter"/><polyline points="442,646.2 449.9,654.4 457.8,646.2" fill="none" stroke="#f3f4f4" stroke-width="2.3" stroke-linecap="butt" stroke-linejoin="miter"/></svg>
<div class=t style="left:137.6px;top:25.51px;font-size:18.3px;font-weight:400;color:#b8bdbd;letter-spacing:0.013px;">Corporate</div>
<div class=t style="left:137.5px;top:50.41px;font-size:25.5px;font-weight:700;color:#ffffff;letter-spacing:0.484px;">Reports</div>
<div class=t style="left:137.1px;top:140.22px;font-size:21px;font-weight:700;color:#f3f4f4;letter-spacing:-0.065px;">Reports Home</div>
<div class=t style="left:137.6px;top:202.72px;font-size:21px;font-weight:700;color:#f3f4f4;letter-spacing:-0.134px;">Custom Reports</div>
<div class=t style="left:137.6px;top:265.22px;font-size:21px;font-weight:700;color:#f3f4f4;letter-spacing:0.116px;">Cross-Network</div>
<div class=t style="left:137.1px;top:327.72px;font-size:21px;font-weight:700;color:#f3f4f4;letter-spacing:-0.049px;">Profiles by Network</div>
<div class=t style="left:137.1px;top:390.22px;font-size:21px;font-weight:700;color:#f3f4f4;letter-spacing:-0.114px;">Paid by Network</div>
<div class=t style="left:137.6px;top:452.72px;font-size:21px;font-weight:700;color:#f3f4f4;letter-spacing:-0.045px;">Competitors by Network</div>
<div class=t style="left:138.2px;top:515.22px;font-size:21px;font-weight:700;color:#f3f4f4;letter-spacing:-0.008px;">Twitter Analysis</div>
<div class=t style="left:137.1px;top:577.72px;font-size:21px;font-weight:700;color:#f3f4f4;letter-spacing:0.081px;">Internal Performance</div>
<div class=t style="left:137.1px;top:640.22px;font-size:21px;font-weight:700;color:#f3f4f4;letter-spacing:-0.272px;">Reviews</div>
<div class=t style="left:137.6px;top:702.72px;font-size:21px;font-weight:700;color:#f3f4f4;letter-spacing:-0.121px;">Customize Branding</div>
<div class=t style="left:525.3px;top:19.05px;font-size:29px;font-weight:700;color:#273333;letter-spacing:0.439px;">Profile Performance</div>
<div class=t style="left:526.5px;top:60.21px;font-size:17px;font-weight:400;color:#364141;letter-spacing:0.461px;">Activity from Aug 1, 2023 - Sept 1, 2023 (PST/PDT)</div>
<div class=t style="left:1602.4px;top:39.50px;font-size:21.5px;font-weight:700;color:#273333;letter-spacing:0.807px;">8/1/2023 - 9/1/2023</div>
<div class=t style="left:1810.0px;top:42.14px;font-size:18.5px;font-weight:400;color:#515e5f;letter-spacing:0.036px;">vs 8/1/2022 - 9/1/2022</div>
<div class=t style="left:2157.6px;top:41.45px;font-size:20.5px;font-weight:700;color:#273333;letter-spacing:0.243px;">Share</div>
<div class=t style="left:2304.4px;top:41.45px;font-size:20.5px;font-weight:700;color:#ffffff;letter-spacing:0.260px;">Filter</div>
<div class=t style="left:525.6px;top:122.07px;font-size:20px;font-weight:700;color:#273333;letter-spacing:0.316px;">Sources</div>
<div class=t style="left:526.0px;top:149.19px;font-size:17.5px;font-weight:400;color:#515e5f;letter-spacing:0.271px;">Viewing All</div>
<div class=t style="left:1108.2px;top:122.07px;font-size:20px;font-weight:700;color:#273333;letter-spacing:0.479px;">Post Types</div>
<div class=t style="left:1108.8px;top:149.19px;font-size:17.5px;font-weight:400;color:#515e5f;letter-spacing:0.251px;">Viewing All</div>
<div class=t style="left:2134.7px;top:133.02px;font-size:21px;font-weight:700;color:#9dbfd9;letter-spacing:-0.117px;">Clear All</div>
<div class=t style="left:2255.6px;top:133.52px;font-size:21px;font-weight:700;color:#a2a8a8;letter-spacing:-0.098px;">Save As...</div>
<div class=t style="left:939.8px;top:234.45px;font-size:20.5px;font-weight:700;color:#273333;letter-spacing:0.530px;">Overview</div>
<div class=t style="left:1873.4px;top:234.25px;font-size:20.5px;font-weight:700;color:#364141;letter-spacing:0.268px;">Profiles</div>
<div class=t style="left:562.6px;top:331.41px;font-size:25.5px;font-weight:700;color:#273333;letter-spacing:0.490px;">Performance Summary</div>
<div class=t style="left:564.0px;top:368.02px;font-size:21px;font-weight:400;color:#364141;letter-spacing:0.402px;">View your key profile performance metrics from the reporting period.</div>
<div class=t style="left:562.2px;top:463.85px;font-size:20.5px;font-weight:400;color:#515e5f;letter-spacing:0.645px;">Impressions</div>
<div class=t style="left:562.8px;top:505.64px;font-size:40px;font-weight:700;color:#273333;letter-spacing:2.093px;">673,523</div>
<div class=t style="left:751.4px;top:524.19px;font-size:19.5px;font-weight:400;color:#1f7d7c;letter-spacing:0.970px;">3%</div>
<div class=t style="left:1178.9px;top:463.85px;font-size:20.5px;font-weight:400;color:#515e5f;letter-spacing:0.415px;">Engagements</div>
<div class=t style="left:1180.1px;top:505.64px;font-size:40px;font-weight:700;color:#273333;letter-spacing:2.700px;">42,459</div>
<div class=t style="left:1349.9px;top:524.19px;font-size:19.5px;font-weight:400;color:#1f7d7c;letter-spacing:0.767px;">45.6%</div>
<div class=t style="left:1794.9px;top:463.85px;font-size:20.5px;font-weight:400;color:#515e5f;letter-spacing:0.421px;">Engagement Rate (per Impression)</div>
<div class=t style="left:1795.3px;top:505.64px;font-size:40px;font-weight:700;color:#273333;letter-spacing:0.265px;">6.3%</div>
<div class=t style="left:1920.9px;top:524.19px;font-size:19.5px;font-weight:400;color:#1f7d7c;letter-spacing:0.167px;">41.5%</div>
<div class=t style="left:562.4px;top:632.65px;font-size:20.5px;font-weight:400;color:#515e5f;letter-spacing:0.485px;">Post Link Clicks</div>
<div class=t style="left:563.2px;top:674.44px;font-size:40px;font-weight:700;color:#273333;letter-spacing:-0.498px;">31,119</div>
<div class=t style="left:705.7px;top:692.99px;font-size:19.5px;font-weight:400;color:#1f7d7c;letter-spacing:0.314px;">89.1%</div>
<div class=t style="left:1180.5px;top:632.65px;font-size:20.5px;font-weight:400;color:#515e5f;letter-spacing:0.395px;">Video Views</div>
<div class=t style="left:1178.9px;top:674.44px;font-size:40px;font-weight:700;color:#273333;letter-spacing:1.740px;">72,257</div>
<div class=t style="left:1341.1px;top:692.99px;font-size:19.5px;font-weight:400;color:#162020;letter-spacing:-0.664px;">13.1%</div>
<div class=t style="left:1796.5px;top:632.65px;font-size:20.5px;font-weight:400;color:#515e5f;letter-spacing:0.437px;">Audience</div>
<div class=t style="left:1795.7px;top:674.44px;font-size:40px;font-weight:700;color:#273333;letter-spacing:1.843px;">373,748</div>
<div class=t style="left:1983.6px;top:692.99px;font-size:19.5px;font-weight:400;color:#1f7d7c;letter-spacing:0.162px;">1.4%</div>
<div class=t style="left:563.0px;top:813.26px;font-size:24.5px;font-weight:700;color:#273333;letter-spacing:1.002px;">Engagement</div>
<div class=t style="left:563.2px;top:849.12px;font-size:21px;font-weight:400;color:#364141;letter-spacing:0.327px;">See how people are engaging with your posts during the reporting period.</div>
<div class=t style="left:574.0px;top:928.52px;font-size:21px;font-weight:400;color:#364141;letter-spacing:0.130px;">Reactions, Comments, Shares, Post Link Clicks, Saves, Other Post...</div>
<div class=t style="left:1284.8px;top:928.52px;font-size:21px;font-weight:400;color:#364141;letter-spacing:0.255px;">Breakdown by Network</div>
<div class=t style="left:1553.7px;top:928.52px;font-size:21px;font-weight:400;color:#515e5f;letter-spacing:0.100px;">by Day</div>
<div class=t style="left:562.8px;top:999.91px;font-size:18.3px;font-weight:400;color:#515e5f;letter-spacing:0.000px;">4,000</div>
<div class=t style="left:562.7px;top:1092.41px;font-size:18.3px;font-weight:400;color:#515e5f;letter-spacing:0.000px;">3,000</div>
<div class=t style="left:562.3px;top:1184.91px;font-size:18.3px;font-weight:400;color:#515e5f;letter-spacing:0.000px;">2,000</div>
<div class=t style="left:561.9px;top:1277.41px;font-size:18.3px;font-weight:400;color:#515e5f;letter-spacing:0.000px;">1,000</div>
<div class=t style="left:562.7px;top:1369.91px;font-size:18.3px;font-weight:400;color:#515e5f;letter-spacing:0.000px;">0</div>
<div class=t style="left:608.2px;top:1443.73px;font-size:16.5px;font-weight:700;color:#465252;letter-spacing:0.530px;">Aug</div>
<div class=t style="left:1056.2px;top:1490.29px;font-size:20.8px;font-weight:400;color:#515e5f;letter-spacing:0.689px;">Twitter</div>
<div class=t style="left:1190.0px;top:1490.29px;font-size:20.8px;font-weight:400;color:#515e5f;letter-spacing:0.202px;">Facebook</div>
<div class=t style="left:1352.4px;top:1490.29px;font-size:20.8px;font-weight:400;color:#515e5f;letter-spacing:0.612px;">Instagram</div>
<div class=t style="left:1517.7px;top:1490.29px;font-size:20.8px;font-weight:400;color:#515e5f;letter-spacing:0.542px;">LinkedIn</div>
<div class=t style="left:1669.6px;top:1490.29px;font-size:20.8px;font-weight:400;color:#515e5f;letter-spacing:0.277px;">TikTok</div>
<div class=t style="left:1801.3px;top:1490.29px;font-size:20.8px;font-weight:400;color:#515e5f;letter-spacing:-0.212px;">YouTube</div>
<div class=t style="left:618.8px;top:1414.56px;font-size:18px;color:#515e5f">1</div>
<div class=t style="left:682.0px;top:1414.56px;font-size:18px;color:#515e5f">2</div>
<div class=t style="left:745.1px;top:1414.56px;font-size:18px;color:#515e5f">3</div>
<div class=t style="left:808.1px;top:1414.56px;font-size:18px;color:#515e5f">4</div>
<div class=t style="left:871.0px;top:1414.56px;font-size:18px;color:#515e5f">5</div>
<div class=t style="left:934.0px;top:1414.56px;font-size:18px;color:#515e5f">6</div>
<div class=t style="left:997.1px;top:1414.56px;font-size:18px;color:#515e5f">7</div>
<div class=t style="left:1060.1px;top:1414.56px;font-size:18px;color:#515e5f">8</div>
<div class=t style="left:1123.2px;top:1414.56px;font-size:18px;color:#515e5f">9</div>
<div class=t style="left:1180.9px;top:1414.56px;font-size:18px;color:#515e5f">10</div>
<div class=t style="left:1244.6px;top:1414.56px;font-size:18px;color:#515e5f">11</div>
<div class=t style="left:1307.0px;top:1414.56px;font-size:18px;color:#515e5f">12</div>
<div class=t style="left:1369.9px;top:1414.56px;font-size:18px;color:#515e5f">13</div>
<div class=t style="left:1432.9px;top:1414.56px;font-size:18px;color:#515e5f">14</div>
<div class=t style="left:1496.0px;top:1414.56px;font-size:18px;color:#515e5f">15</div>
<div class=t style="left:1559.0px;top:1414.56px;font-size:18px;color:#515e5f">16</div>
<div class=t style="left:1622.1px;top:1414.56px;font-size:18px;color:#515e5f">17</div>
<div class=t style="left:1685.0px;top:1414.56px;font-size:18px;color:#515e5f">18</div>
<div class=t style="left:1748.1px;top:1414.56px;font-size:18px;color:#515e5f">19</div>
<div class=t style="left:1811.2px;top:1414.56px;font-size:18px;color:#515e5f">20</div>
<div class=t style="left:1874.4px;top:1414.56px;font-size:18px;color:#515e5f">21</div>
<div class=t style="left:1937.4px;top:1414.56px;font-size:18px;color:#515e5f">22</div>
<div class=t style="left:2000.3px;top:1414.56px;font-size:18px;color:#515e5f">23</div>
<div class=t style="left:2063.2px;top:1414.56px;font-size:18px;color:#515e5f">24</div>
<div class=t style="left:2126.3px;top:1414.56px;font-size:18px;color:#515e5f">25</div>
<div class=t style="left:2189.4px;top:1414.56px;font-size:18px;color:#515e5f">26</div>
<div class=t style="left:2252.5px;top:1414.56px;font-size:18px;color:#515e5f">27</div>
<div class=t style="left:2315.4px;top:1414.56px;font-size:18px;color:#515e5f">28</div>
</body></html>
